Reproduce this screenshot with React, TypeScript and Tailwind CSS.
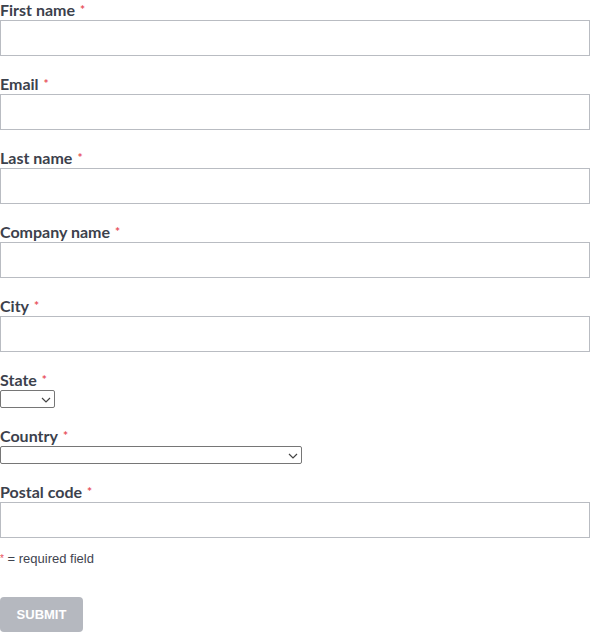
import React from 'react';

const font = { fontFamily: 'Lato, "Open Sans", sans-serif' };

const Label = ({ text }: { text: string }) => (
  <label className="flex h-[20px] items-start text-[16px] font-bold leading-[20px] text-[#3c414c]">
    {text}
    <span className="ml-[5px] mt-[2px] text-[12px] leading-[16px] text-[#e8505b]">*</span>
  </label>
);

const TextField = ({ label }: { label: string }) => (
  <div className="mb-[18px]">
    <Label text={label} />
    <input
      type="text"
      className="block h-[36px] w-[590px] border border-[#b9bcc2] bg-white px-2 outline-none"
    />
  </div>
);

const Chevron = () => (
  <svg width="10" height="6" viewBox="0 0 10 6" fill="none" className="pointer-events-none absolute right-[4px] top-[7px]">
    <path d="M1 1l4 4 4-4" stroke="#444" strokeWidth="1.2" />
  </svg>
);

const SelectField = ({ label, width }: { label: string; width: string }) => (
  <div className="mb-[18px]">
    <Label text={label} />
    <div className={`relative h-[18px] ${width}`}>
      <select className="block h-[18px] w-full appearance-none rounded-[2px] border border-[#767676] bg-white text-[12px]">
        <option value="" />
      </select>
      <Chevron />
    </div>
  </div>
);

export default function App() {
  return (
    <div className="min-h-screen bg-white" style={font}>
      <form className="w-[590px]" onSubmit={(e) => e.preventDefault()}>
        <TextField label="First name" />
        <TextField label="Email" />
        <TextField label="Last name" />
        <TextField label="Company name" />
        <TextField label="City" />
        <SelectField label="State" width="w-[55px]" />
        <SelectField label="Country" width="w-[302px]" />
        <TextField label="Postal code" />
        <p className="-mt-[7px] text-[13px] leading-[20px] text-[#3f4450]" style={{ fontFamily: '"Liberation Sans", Arial, sans-serif' }}>
          <span className="text-[10px] text-[#e8505b] align-top">*</span> = required field
        </p>
        <button
          type="submit"
          disabled
          className="mt-[28px] h-[35px] w-[83px] rounded-[4px] bg-[#b5b8bf] text-[13px] font-bold uppercase text-white"
          style={{ fontFamily: '"Liberation Sans", Arial, sans-serif' }}
        >
          Submit
        </button>
      </form>
    </div>
  );
}
